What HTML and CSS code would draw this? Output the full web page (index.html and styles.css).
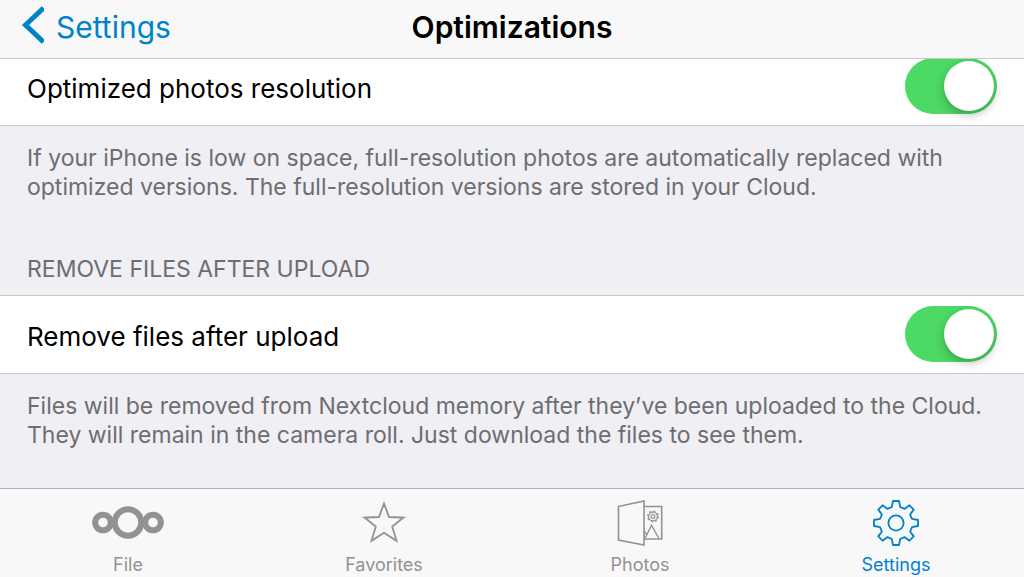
FILE: index.html
```html
<!DOCTYPE html>
<html lang="en">
<head>
    <meta charset="UTF-8">
    <meta name="viewport" content="width=device-width, initial-scale=1.0">
    <title>Optimizations</title>
    <link rel="stylesheet" href="styles.css">
</head>
<body>
    <header class="navbar">
        <a href="#settings" class="back-link">
            <svg class="back-icon" width="24" height="42" viewBox="0 0 24 42" aria-hidden="true">
                <path d="M23.5 2 L5.5 19 L23.5 36" fill="none" stroke="currentColor" stroke-width="5"/>
            </svg>
            Settings
        </a>
        <h1>Optimizations</h1>
    </header>

    <main class="content">
        <section class="group">
            <div class="row">
                <label for="optimizedPhotos">Optimized photos resolution</label>
                <input type="checkbox" role="switch" class="switch" id="optimizedPhotos" checked>
            </div>
            <p class="note">If your iPhone is low on space, full-resolution photos are automatically replaced with optimized versions. The full-resolution versions are stored in your Cloud.</p>
        </section>

        <section class="group">
            <h2>REMOVE FILES AFTER UPLOAD</h2>
            <div class="row">
                <label for="removeFiles">Remove files after upload</label>
                <input type="checkbox" role="switch" class="switch" id="removeFiles" checked>
            </div>
            <p class="note">Files will be removed from Nextcloud memory after they’ve been uploaded to the Cloud. They will remain in the camera roll. Just download the files to see them.</p>
        </section>
    </main>

    <nav class="tabbar">
        <a href="#file" class="tab">
            <svg width="76" height="48" viewBox="-38 -24 76 48" fill="none" stroke="currentColor" stroke-width="6" aria-hidden="true">
                <circle cx="-25" cy="-0.5" r="7.8"/>
                <circle cx="0" cy="-0.5" r="13.3"/>
                <circle cx="25" cy="-0.5" r="7.8"/>
            </svg>
            File
        </a>
        <a href="#favorites" class="tab">
            <svg width="48" height="48" viewBox="-24 -24 48 48" fill="none" stroke="currentColor" stroke-width="1.8" aria-hidden="true">
                <path d="M0 -19.5 L5 -6 L19.5 -5.5 L8.2 3.5 L12.5 17.8 L0 9.7 L-12.5 17.8 L-8.2 3.5 L-19.5 -5.5 L-5 -6 Z"/>
            </svg>
            Favorites
        </a>
        <a href="#photos" class="tab">
            <svg width="48" height="48" viewBox="-24 -24 48 48" fill="none" stroke="currentColor" stroke-width="1.6" aria-hidden="true">
                <path d="M-21.5 -16.5 L4 -22 V22 L-21.5 17 Z"/>
                <path d="M4 -16.5 H21.7 V16 H4"/>
                <circle cx="13" cy="-6.5" r="4.4" stroke-width="1.2"/>
                <circle cx="13" cy="-6.5" r="5.4" stroke-width="1.2" stroke-dasharray="2.1 2.1"/>
                <circle cx="13" cy="-6.5" r="1.9" stroke-width="1.2"/>
                <path d="M5 15.5 L11.5 2.2 L19 15.5 M4 8 L6.8 11.5" stroke-width="1.4"/>
            </svg>
            Photos
        </a>
        <a href="#settings" class="tab active">
            <svg width="48" height="48" viewBox="-24 -24 48 48" fill="none" stroke="currentColor" stroke-width="1.8" stroke-linejoin="round" aria-hidden="true">
                <path d="M-3 -22 L3 -22 L4.2 -16 L8.5 -14.1 L13.4 -17.7 L17.7 -13.4 L14.1 -8.5 L16 -4.2 L22 -3 L22 3 L16 4.2 L14.1 8.5 L17.7 13.4 L13.4 17.7 L8.5 14.1 L4.2 16 L3 22 L-3 22 L-4.2 16 L-8.5 14.1 L-13.4 17.7 L-17.7 13.4 L-14.1 8.5 L-16 4.2 L-22 3 L-22 -3 L-16 -4.2 L-14.1 -8.5 L-17.7 -13.4 L-13.4 -17.7 L-8.5 -14.1 L-4.2 -16 Z"/>
                <circle cx="0" cy="0" r="7.6"/>
            </svg>
            Settings
        </a>
    </nav>
</body>
</html>
```

FILE: styles.css
```css
:root {
    --bar-color: #f8f8f8;
    --page-color: #efeff4;
    --line-color: #c8c7cc;
    --tint-color: #0082c9;
    --note-color: #6d6d72;
    --tab-color: #929292;
    --switch-color: #4cd964;
}

* {
    margin: 0;
    padding: 0;
    box-sizing: border-box;
}

body {
    display: flex;
    flex-direction: column;
    height: 100vh;
    overflow: hidden;
    background-color: var(--page-color);
    color: #000;
    font-family: Inter, "Liberation Sans", sans-serif;
}

a {
    text-decoration: none;
}

.navbar {
    display: grid;
    grid-template-columns: 1fr auto 1fr;
    align-items: center;
    flex-shrink: 0;
    height: 59px;
    padding: 0 20px 4px;
    background-color: var(--bar-color);
    border-bottom: 1px solid var(--line-color);
    z-index: 1;
}

.navbar h1 {
    font-size: 30px;
    font-weight: 600;
}

.back-link {
    display: flex;
    align-items: center;
    gap: 12px;
    color: var(--tint-color);
    font-size: 30px;
}

/* the list is scrolled slightly under the navbar */
.content {
    flex: 1;
    margin-top: -12px;
}

.row {
    display: flex;
    align-items: center;
    justify-content: space-between;
    height: 79px;
    padding: 0 27px 2px;
    background-color: #fff;
    border-top: 1px solid var(--line-color);
    border-bottom: 1px solid var(--line-color);
}

.row label {
    padding-top: 6px;
    font-size: 26px;
}

.switch {
    appearance: none;
    display: flex;
    justify-content: flex-end;
    width: 92px;
    height: 56px;
    padding: 3px;
    border-radius: 28px;
    background-color: var(--switch-color);
    cursor: pointer;
}

.switch::before {
    content: "";
    width: 50px;
    height: 50px;
    border-radius: 50%;
    background-color: #fff;
    box-shadow: 0 4px 10px rgba(0, 0, 0, 0.25);
}

.switch:not(:checked) {
    justify-content: flex-start;
    background-color: #e5e5ea;
}

.note {
    padding: 18px 27px 0;
    color: var(--note-color);
    font-size: 23px;
    line-height: 29px;
}

.group h2 {
    padding: 52px 27px 11px;
    color: var(--note-color);
    font-size: 23px;
    font-weight: 400;
    line-height: 30px;
}

.tabbar {
    display: grid;
    grid-template-columns: repeat(4, 1fr);
    flex-shrink: 0;
    height: 89px;
    background-color: var(--bar-color);
    border-top: 1px solid #b2b2b6;
}

.tab {
    display: flex;
    flex-direction: column;
    align-items: center;
    gap: 7px;
    padding-top: 10px;
    color: var(--tab-color);
    font-size: 18px;
    line-height: 22px;
}

.tab.active {
    color: var(--tint-color);
}
```
